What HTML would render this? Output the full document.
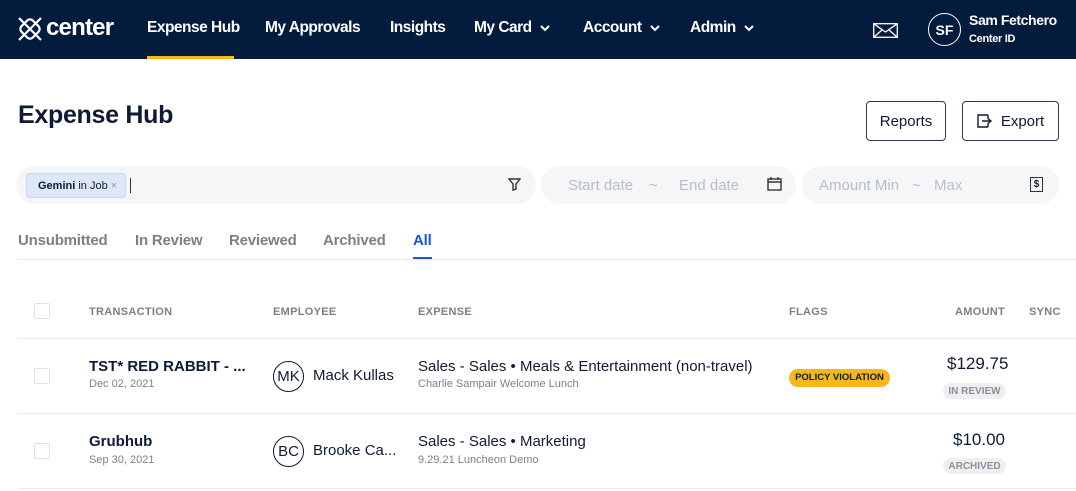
<!DOCTYPE html>
<html><head><meta charset="utf-8"><style>
*{box-sizing:border-box;margin:0;padding:0}
body{width:1076px;height:491px;overflow:hidden;background:#fff;font-family:"Liberation Sans",sans-serif;color:#0d1b36;position:relative}
.a{position:absolute;white-space:nowrap}
.nav{position:absolute;left:0;top:0;width:1076px;height:59px;background:#031b3d}
.nav .t{color:#fff;font-size:15.5px;font-weight:bold;top:19px;letter-spacing:-.5px;display:flex;align-items:center;gap:8px}
.btn{position:absolute;border:1.5px solid #2b3a52;border-radius:4px;font-size:15px;display:flex;align-items:center;justify-content:center;gap:8px}
.pill{position:absolute;top:166px;height:38px;background:#f5f6f8;border-radius:19px}
.ph{color:#b8bec8;font-size:15px;top:177px}
.tab{top:232px;font-size:15px;font-weight:bold;color:#7a808a;letter-spacing:-.2px}
.hd{top:306px;font-size:11px;font-weight:bold;color:#7a808a;letter-spacing:.3px}
.cb{position:absolute;width:16px;height:16px;border:1.5px solid #dfe2e6;border-radius:2px;left:34px}
.line{position:absolute;left:18px;width:1058px;height:1px;background:#e8eaee}
.av{position:absolute;width:31px;height:31px;border:1.3px solid #0d1b36;border-radius:50%;font-size:15px;display:flex;align-items:center;justify-content:center}
.tag{position:absolute;background:#eeeff1;color:#8c9199;font-size:10px;font-weight:bold;border-radius:8px;height:16px;display:flex;align-items:center;justify-content:center}
</style></head><body>
<div class="nav">
 <svg class="a" style="left:16px;top:15px" width="28" height="28" viewBox="0 0 28 28" fill="none" stroke="#fff" stroke-width="2.2"><rect x="6" y="6" width="16" height="16" rx="4" transform="rotate(45 14 14)"/><path d="M3 3L25 25M25 3L3 25"/></svg>
 <div class="a" style="left:46px;top:14px;color:#fff;font-size:24px;font-weight:bold;letter-spacing:-.8px">center</div>
 <div class="a t" style="left:147px">Expense Hub</div>
 <div class="a" style="left:147px;top:56px;width:87px;height:3px;background:#f5b719"></div>
 <div class="a t" style="left:265px">My Approvals</div>
 <div class="a t" style="left:390px">Insights</div>
 <div class="a t" style="left:474px">My Card <svg width="10" height="7" viewBox="0 0 10 7" fill="none" stroke="#fff" stroke-width="2"><path d="M1 1l4 4 4-4"/></svg></div>
 <div class="a t" style="left:583px">Account <svg width="10" height="7" viewBox="0 0 10 7" fill="none" stroke="#fff" stroke-width="2"><path d="M1 1l4 4 4-4"/></svg></div>
 <div class="a t" style="left:690px">Admin <svg width="10" height="7" viewBox="0 0 10 7" fill="none" stroke="#fff" stroke-width="2"><path d="M1 1l4 4 4-4"/></svg></div>
 <svg class="a" style="left:873px;top:23px" width="25" height="15" viewBox="0 0 25 15" fill="none" stroke="#fff" stroke-width="1.3"><rect x=".7" y=".7" width="23.6" height="13.6"/><path d="M.7 .7L12.5 9 24.3 .7M.7 14.3L9 7M24.3 14.3L16 7"/></svg>
 <div class="a" style="left:928px;top:13px;width:33px;height:33px;border:1.3px solid #fff;border-radius:50%;color:#fff;font-size:14px;font-weight:bold;display:flex;align-items:center;justify-content:center">SF</div>
 <div class="a" style="left:969px;top:12px;color:#fff;font-size:14px;font-weight:bold;letter-spacing:-.4px">Sam Fetchero</div>
 <div class="a" style="left:969px;top:33px;color:#fff;font-size:11px;font-weight:bold;letter-spacing:-.3px">Center ID</div>
</div>
<div class="a" style="left:18px;top:101px;font-size:25px;font-weight:bold;letter-spacing:-.3px">Expense Hub</div>
<div class="btn" style="left:866px;top:101px;width:80px;height:40px">Reports</div>
<div class="btn" style="left:962px;top:101px;width:97px;height:40px"><svg width="16" height="14" viewBox="0 0 16 14" fill="none" stroke="#0d1b36" stroke-width="1.4"><path d="M11 1H1v12h10M11 9v4M11 1v4M5 7h9M11 4.5L14 7l-3 2.5"/></svg>Export</div>
<div class="pill" style="left:16px;width:520px"></div>
<div class="a" style="left:26px;top:173px;width:100px;height:25px;background:#dde7f7;border:1px solid #c9d7ef;border-radius:3px;font-size:11px;padding:6px 0 0 11px"><b>Gemini</b> in Job <span style="color:#999">×</span></div>
<div class="a" style="left:130px;top:178px;width:1px;height:15px;background:#333"></div>
<svg class="a" style="left:508px;top:178px" width="13" height="13" viewBox="0 0 13 13" fill="none" stroke="#333" stroke-width="1.4"><path d="M1 1h11L8 6v5L5 12V6z"/></svg>
<div class="pill" style="left:541px;width:255px"></div>
<div class="a ph" style="left:568px">Start date</div><div class="a ph" style="left:649px">~</div><div class="a ph" style="left:679px">End date</div>
<svg class="a" style="left:767px;top:177px" width="15" height="14" viewBox="0 0 15 14" fill="none" stroke="#333" stroke-width="1.4"><rect x="1" y="2" width="13" height="11"/><path d="M1 5h13M4 0v3M11 0v3"/></svg>
<div class="pill" style="left:802px;width:257px"></div>
<div class="a ph" style="left:819px">Amount Min</div><div class="a ph" style="left:912px">~</div><div class="a ph" style="left:934px">Max</div>
<div class="a" style="left:1030px;top:177px;width:13px;height:15px;border:1.3px solid #333;font-size:10px;font-weight:bold;text-align:center;line-height:13px">$</div>
<div class="a tab" style="left:18px">Unsubmitted</div>
<div class="a tab" style="left:135px">In Review</div>
<div class="a tab" style="left:229px">Reviewed</div>
<div class="a tab" style="left:323px">Archived</div>
<div class="a tab" style="left:413px;color:#1a56d6">All</div>
<div class="a" style="left:413px;top:257px;width:19px;height:3px;background:#1a56d6"></div>
<div class="line" style="top:259px"></div>
<div class="cb" style="top:303px"></div>
<div class="a hd" style="left:89px">TRANSACTION</div>
<div class="a hd" style="left:273px">EMPLOYEE</div>
<div class="a hd" style="left:418px">EXPENSE</div>
<div class="a hd" style="left:789px">FLAGS</div>
<div class="a hd" style="left:955px">AMOUNT</div>
<div class="a hd" style="left:1029px">SYNC</div>
<div class="line" style="top:338px"></div>
<div class="cb" style="top:368px"></div>
<div class="a" style="left:89px;top:358px;font-size:15px;font-weight:bold">TST* RED RABBIT - ...</div>
<div class="a" style="left:89px;top:378px;font-size:11px;color:#7a808a">Dec 02, 2021</div>
<div class="av" style="left:273px;top:361px">MK</div>
<div class="a" style="left:313px;top:367px;font-size:15px">Mack Kullas</div>
<div class="a" style="left:418px;top:358px;font-size:15px">Sales - Sales • Meals &amp; Entertainment (non-travel)</div>
<div class="a" style="left:418px;top:378px;font-size:11px;color:#7a808a">Charlie Sampair Welcome Lunch</div>
<div class="a" style="left:789px;top:369px;width:101px;height:18px;background:#f7b719;border-radius:9px;font-size:9.5px;font-weight:bold;text-align:center;line-height:18px">POLICY VIOLATION</div>
<div class="a" style="left:947px;top:354px;font-size:17px">$129.75</div>
<div class="tag" style="left:943px;top:383px;width:63px">IN REVIEW</div>
<div class="line" style="top:413px"></div>
<div class="cb" style="top:443px"></div>
<div class="a" style="left:89px;top:433px;font-size:15px;font-weight:bold">Grubhub</div>
<div class="a" style="left:89px;top:454px;font-size:11px;color:#7a808a">Sep 30, 2021</div>
<div class="av" style="left:273px;top:436px">BC</div>
<div class="a" style="left:313px;top:442px;font-size:15px">Brooke Ca...</div>
<div class="a" style="left:418px;top:433px;font-size:15px">Sales - Sales • Marketing</div>
<div class="a" style="left:418px;top:454px;font-size:11px;color:#7a808a">9.29.21 Luncheon Demo</div>
<div class="a" style="left:953px;top:430px;font-size:17px">$10.00</div>
<div class="tag" style="left:943px;top:458px;width:63px">ARCHIVED</div>
<div class="line" style="top:488px"></div>
</body></html>
